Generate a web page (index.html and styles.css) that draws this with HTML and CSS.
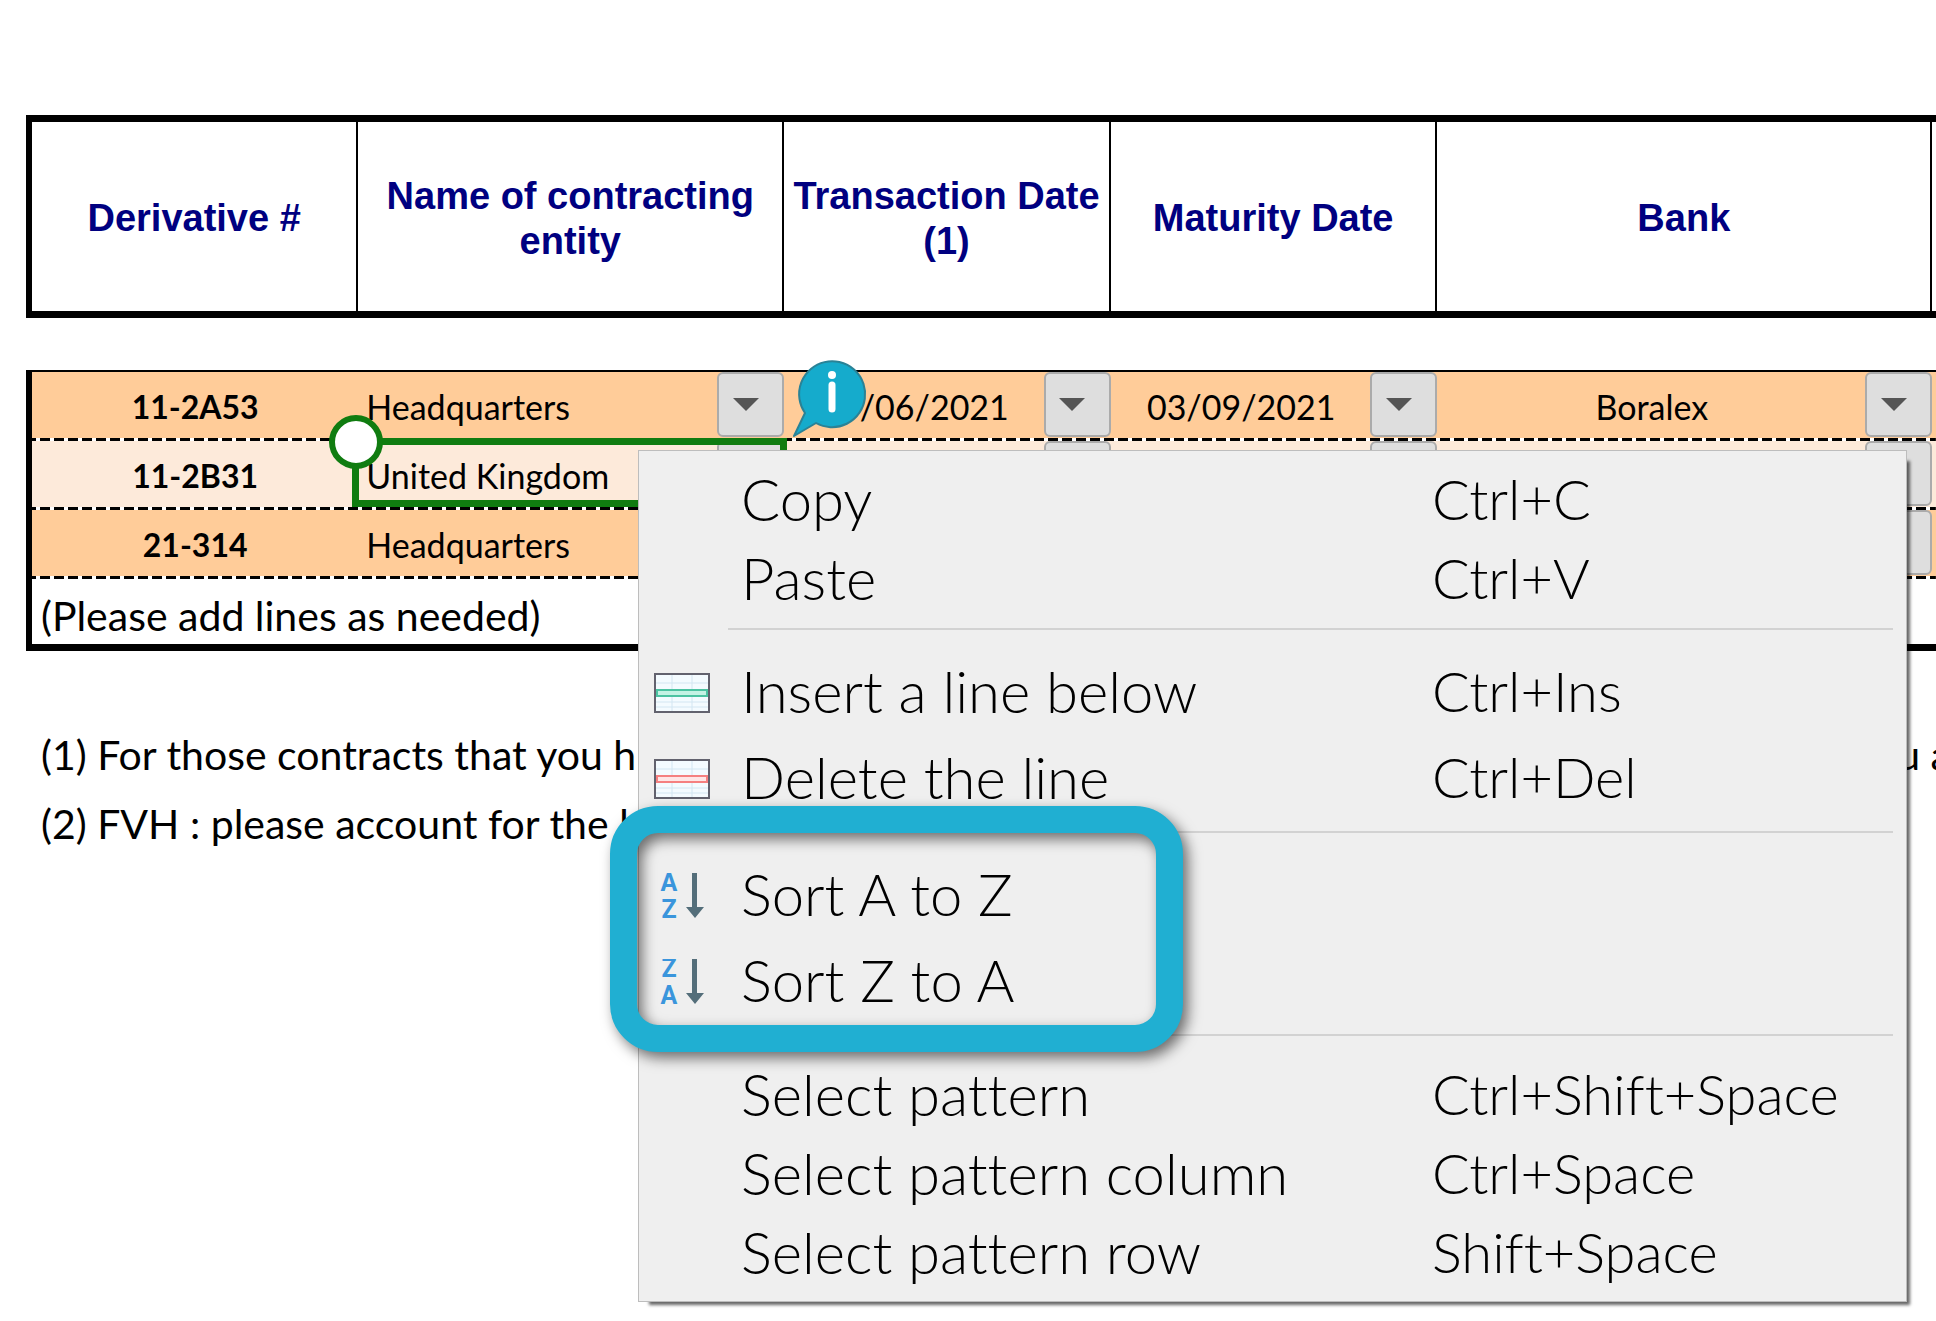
FILE: index.html
```
<!DOCTYPE html>
<html lang="en">
<head>
    <meta charset="UTF-8">
    <meta name="viewport" content="width=device-width, initial-scale=1.0">
    <title>Derivatives</title>

    <link rel="stylesheet" href="styles.css">
</head>

<body>

    <main class="sheet">

        <table class="grid">
            <colgroup>
                <col class="col-id">
                <col class="col-entity">
                <col class="col-date">
                <col class="col-date">
                <col class="col-bank">
                <col>
            </colgroup>
            <thead>
                <tr>
                    <th scope="col">Derivative #</th>
                    <th scope="col">Name of contracting entity</th>
                    <th scope="col">Transaction Date (1)</th>
                    <th scope="col">Maturity Date</th>
                    <th scope="col">Bank</th>
                    <td></td>
                </tr>
            </thead>
            <tbody>
                <tr class="gap">
                    <td colspan="6"></td>
                </tr>
                <tr class="line first">
                    <th scope="row">11-2A53</th>
                    <td>
                        <div class="picker left">
                            <select aria-label="Entity"><option>Headquarters</option></select>
                            <span class="arrow"></span>
                        </div>
                    </td>
                    <td>
                        <div class="picker">
                            <select aria-label="Transaction date"><option>30/06/2021</option></select>
                            <span class="arrow"></span>
                        </div>
                        <svg class="info" viewBox="0 0 76 80" aria-hidden="true">
                            <path d="M2 78 L13 55 A33 33 0 1 1 24 65 Z" fill="#15abcc" stroke="#2a8296" stroke-width="2" stroke-linejoin="round"/>
                            <circle cx="40" cy="17" r="4" fill="#fff"/>
                            <path d="M40 27 V51" stroke="#fff" stroke-width="7" stroke-linecap="round"/>
                        </svg>
                    </td>
                    <td>
                        <div class="picker">
                            <select aria-label="Maturity date"><option>03/09/2021</option></select>
                            <span class="arrow"></span>
                        </div>
                    </td>
                    <td>
                        <div class="picker">
                            <select aria-label="Bank"><option>Boralex</option></select>
                            <span class="arrow"></span>
                        </div>
                    </td>
                    <td></td>
                </tr>
                <tr class="line light">
                    <th scope="row">11-2B31</th>
                    <td>
                        <div class="picker left">
                            <select aria-label="Entity"><option>United Kingdom</option></select>
                            <span class="arrow"></span>
                        </div>
                        <div class="selection"></div>
                    </td>
                    <td><div class="picker"><span class="arrow"></span></div></td>
                    <td><div class="picker"><span class="arrow"></span></div></td>
                    <td><div class="picker"><span class="arrow"></span></div></td>
                    <td></td>
                </tr>
                <tr class="line">
                    <th scope="row">21-314</th>
                    <td>
                        <div class="picker left">
                            <select aria-label="Entity"><option>Headquarters</option></select>
                            <span class="arrow"></span>
                        </div>
                    </td>
                    <td><div class="picker"><span class="arrow"></span></div></td>
                    <td><div class="picker"><span class="arrow"></span></div></td>
                    <td><div class="picker"><span class="arrow"></span></div></td>
                    <td></td>
                </tr>
                <tr class="add">
                    <td colspan="6">(Please add lines as needed)</td>
                </tr>
            </tbody>
        </table>

        <div class="notes">
            <p><span>(1) For those contracts that you h</span><span>u a</span></p>
            <p><span>(2) FVH : please account for the h</span></p>
        </div>

        <!-- Context menu -->
        <div class="menu" role="menu">
            <div class="group">
                <button type="button" role="menuitem"><span class="label">Copy</span><span>Ctrl+C</span></button>
                <button type="button" role="menuitem"><span class="label">Paste</span><span>Ctrl+V</span></button>
            </div>
            <hr>
            <div class="group tall">
                <button type="button" role="menuitem">
                    <svg class="icon" viewBox="0 0 56 40" aria-hidden="true">
                        <rect x="1" y="1" width="54" height="38" fill="#f4fbff" stroke="#62626e" stroke-width="2"/>
                        <path d="M2 10 H54 M2 29 H54 M2 34 H54 M18 2 V38 M38 2 V38" stroke="#d3e6f2"/>
                        <rect x="3" y="17" width="50" height="6" fill="#c4f2e4" stroke="#4cc3a2" stroke-width="2"/>
                    </svg>
                    <span class="label">Insert a line below</span><span>Ctrl+Ins</span>
                </button>
                <button type="button" role="menuitem">
                    <svg class="icon" viewBox="0 0 56 40" aria-hidden="true">
                        <rect x="1" y="1" width="54" height="38" fill="#f4fbff" stroke="#62626e" stroke-width="2"/>
                        <path d="M2 10 H54 M2 29 H54 M2 34 H54 M18 2 V38 M38 2 V38" stroke="#d3e6f2"/>
                        <rect x="3" y="17" width="50" height="6" fill="#ffe6e6" stroke="#f58080" stroke-width="2"/>
                    </svg>
                    <span class="label">Delete the line</span><span>Ctrl+Del</span>
                </button>
            </div>
            <hr>
            <div class="group tall">
                <button type="button" role="menuitem">
                    <svg class="icon sort" viewBox="0 0 56 46" aria-hidden="true">
                        <text x="15" y="18">A</text>
                        <text x="15" y="45">Z</text>
                        <path d="M38 0 H43 V34 H50 L41 45 L32 34 H38 Z" fill="#546e7a"/>
                    </svg>
                    <span class="label">Sort A to Z</span>
                </button>
                <button type="button" role="menuitem">
                    <svg class="icon sort" viewBox="0 0 56 46" aria-hidden="true">
                        <text x="15" y="18">Z</text>
                        <text x="15" y="45">A</text>
                        <path d="M38 0 H43 V34 H50 L41 45 L32 34 H38 Z" fill="#546e7a"/>
                    </svg>
                    <span class="label">Sort Z to A</span>
                </button>
                <div class="highlight"></div>
            </div>
            <hr>
            <div class="group">
                <button type="button" role="menuitem"><span class="label">Select pattern</span><span>Ctrl+Shift+Space</span></button>
                <button type="button" role="menuitem"><span class="label">Select pattern column</span><span>Ctrl+Space</span></button>
                <button type="button" role="menuitem"><span class="label">Select pattern row</span><span>Shift+Space</span></button>
            </div>
        </div>

    </main>

</body>
</html>
```
FILE: styles.css
```
* {
    box-sizing: border-box;
}

body {
    margin: 0;
    background-color: #fff;
    color: #000;
    font-family: Lato, Calibri, sans-serif;
    font-size: 34px;
    font-variant-ligatures: none;
}

.sheet {
    position: relative;
    min-height: 100vh;
    padding: 115px 0 20px 26px;
    overflow: hidden;
}

/* Table */
.grid {
    width: 100%;
    table-layout: fixed;
    border-collapse: separate;
    border-spacing: 0;
}

.grid th,
.grid td {
    padding: 0;
}

.col-id {
    width: 17.4%;
}

.col-entity {
    width: 22.3%;
}

.col-date {
    width: 17.1%;
}

.col-bank {
    width: 25.9%;
}

.grid thead th,
.grid thead td {
    height: 203px;
    border-top: 7px solid #000;
    border-bottom: 7px solid #000;
}

.grid thead th {
    border-right: 2px solid #000;
    padding: 4px 8px 0;
    color: #000080;
    font-family: "Liberation Sans", Arial, sans-serif;
    font-size: 38px;
    line-height: 45px;
}

.grid tr > :first-child {
    border-left: 6px solid #000;
}

.grid .gap td {
    height: 52px;
    border: none;
}

.line {
    background: repeating-linear-gradient(90deg, #000 0 10px, #fff 10px 14px) bottom / 100% 3px no-repeat #ffcc99;
}

.light {
    background-color: #fdeada;
}

.line > * {
    position: relative;
    height: 69px;
}

.line > th {
    font-size: 32px;
}

.line > td {
    vertical-align: top;
}

.first > * {
    height: 71px;
    border-top: 2px solid #000;
}

.picker {
    display: grid;
    height: 65px;
}

.picker select,
.picker .arrow {
    grid-area: 1 / 1;
}

.picker select {
    appearance: none;
    border: none;
    margin-right: 66px;
    padding-top: 4px;
    background: none;
    color: #000;
    font: inherit;
    text-align: center;
    text-align-last: center;
}

.picker.left select {
    padding-left: 8px;
    text-align: left;
    text-align-last: left;
}

.arrow {
    display: flex;
    align-items: center;
    justify-content: center;
    justify-self: end;
    width: 67px;
    padding-right: 10px;
    border: 2px solid #ababab;
    border-radius: 6px;
    background-color: #dedede;
    pointer-events: none;
}

.arrow::before {
    content: "";
    border: 13px solid transparent;
    border-top-color: #555;
    border-bottom: none;
}

.selection {
    position: absolute;
    top: -3px;
    right: -3px;
    bottom: 3px;
    left: -6px;
    z-index: 1;
    border: 7px solid #107c10;
}

.selection::before {
    content: "";
    position: absolute;
    top: -30px;
    left: -30px;
    width: 42px;
    height: 42px;
    border: 6px solid #107c10;
    border-radius: 50%;
    background-color: #fff;
}

.info {
    position: absolute;
    top: -14px;
    left: 8px;
    z-index: 1;
    width: 76px;
    height: 80px;
}

.add td {
    height: 72px;
    border-bottom: 7px solid #000;
}

.grid .add td {
    padding: 8px 0 0 9px;
    font-size: 41px;
    line-height: 48px;
}

/* Notes */
.notes {
    margin-right: -15px;
    padding: 69px 0 0 15px;
    font-size: 41px;
    line-height: 69px;
}

.notes p {
    display: flex;
    justify-content: space-between;
    margin: 0;
    white-space: nowrap;
}

/* Context menu */
.menu {
    position: absolute;
    top: 450px;
    right: 29px;
    left: 638px;
    z-index: 2;
    padding: 8px 0 10px;
    border: 1px solid #bdbdbd;
    background-color: #efefef;
    box-shadow: 7px 7px 3px -4px rgba(0, 0, 0, 0.6);
}

.menu hr {
    height: 2px;
    margin: 11px 13px 18px 89px;
    border: none;
    background-color: #d2d2d2;
}

.group {
    position: relative;
}

.menu button {
    display: grid;
    grid-template-columns: 56px 660px 1fr;
    column-gap: 31px;
    align-items: center;
    width: 100%;
    height: 79px;
    padding: 0 0 0 15px;
    border: none;
    background: none;
    color: #000;
    font-family: Lato, Raleway, sans-serif;
    font-size: 56px;
    font-weight: 300;
    font-variant-ligatures: none;
    line-height: 64px;
    text-align: left;
    white-space: nowrap;
}

.menu .tall button {
    height: 86px;
}

.menu .label {
    grid-column: 2;
    font-size: 58px;
}

.icon {
    width: 56px;
    height: 40px;
    margin-top: 4px;
}

.icon.sort {
    height: 46px;
}

.sort text {
    fill: #3a95dc;
    font-family: Roboto, sans-serif;
    font-size: 25px;
    font-weight: 700;
    text-anchor: middle;
}

.highlight {
    position: absolute;
    top: -45px;
    bottom: -29px;
    left: -29px;
    width: 573px;
    border: 27px solid #20afd2;
    border-radius: 48px;
    filter: drop-shadow(5px 6px 7px rgba(0, 0, 0, 0.55));
    pointer-events: none;
}
```
